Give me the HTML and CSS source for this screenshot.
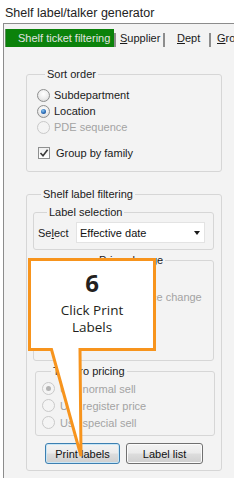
FILE: index.html
```html
<!DOCTYPE html>
<html>
<head>
<meta charset="utf-8">
<link rel="stylesheet" href="styles.css">
</head>
<body>
<div class="title">Shelf label/talker generator</div>
<div class="panel">
  <div class="tabs">
    <div class="tab tab-active">Shelf ticket filtering</div>
    <div class="tab-sep"></div>
    <div class="tab tab-supplier"><u>S</u>upplier</div>
    <div class="tab-sep"></div>
    <div class="tab tab-dept"><u>D</u>ept</div>
    <div class="tab-sep"></div>
    <div class="tab tab-group"><u>G</u>roup</div>
  </div>

  <fieldset class="group sort">
    <legend>Sort order</legend>
    <div class="opt"><span class="radio"></span><span>Subdepartment</span></div>
    <div class="opt"><span class="radio on"></span><span>Location</span></div>
    <div class="opt dis"><span class="radio dis"></span><span>PDE sequence</span></div>
    <div class="opt check-row"><span class="check"><svg width="10" height="10" viewBox="0 0 10 10"><path d="M1.5 5 L4 7.8 L8.6 1.8" fill="none" stroke="#3a3a3a" stroke-width="1.6"/></svg></span><span>Group by family</span></div>
  </fieldset>

  <fieldset class="group shelf">
    <legend>Shelf label filtering</legend>
    <fieldset class="inner labelsel">
      <legend>Label selection</legend>
      <div class="select-row">
        <span class="select-label">Se<u>l</u>ect</span>
        <div class="dropdown"><span>Effective date</span><span class="arrow"></span></div>
      </div>
    </fieldset>
    <fieldset class="inner pricechange">
      <legend>Price change</legend>
      <div class="pc-line">Since last price change</div>
    </fieldset>
    <fieldset class="inner zero">
      <legend>To zero pricing</legend>
      <div class="zopt dis"><span class="radio dis on"></span><span>Use normal sell</span></div>
      <div class="zopt dis"><span class="radio dis"></span><span>Use register price</span></div>
      <div class="zopt dis"><span class="radio dis"></span><span>Use special sell</span></div>
    </fieldset>
    <div class="buttons">
      <div class="btn btn-default">Print labels</div>
      <div class="btn btn-list">Label list</div>
    </div>
  </fieldset>
</div>

<div class="callout">
  <svg class="callout-shape" width="128" height="202" viewBox="0 0 128 202">
    <path d="M1.5 1.5 H126.5 V91.5 H52 L53 198 L23.5 91.5 H1.5 Z" fill="#ffffff" stroke="#f7941d" stroke-width="3"/>
  </svg>
  <div class="callout-text">
    <div class="num">6</div>
    <div class="line">Click Print</div>
    <div class="line">Labels</div>
  </div>
</div>
</body>
</html>
```
FILE: styles.css
```css
* { box-sizing: border-box; }
body {
  margin: 0;
  width: 234px;
  height: 478px;
  overflow: hidden;
  background: #ffffff;
  font-family: "Liberation Sans", Arial, sans-serif;
  font-size: 11px;
  color: #1a1a1a;
  position: relative;
}
.title {
  height: 23px;
  padding: 6px 0 0 5px;
  font-size: 12.5px;
  line-height: 14px;
  color: #222;
}
.panel {
  margin-left: 3px;
  height: 455px;
  border-top: 1px solid #8c8c8c;
  border-left: 1px solid #8c8c8c;
  background: #f3f3f3;
  padding-top: 5px;
}
.tabs {
  display: flex;
  height: 18px;
  margin-left: 1px;
  line-height: 18px;
  white-space: nowrap;
  overflow: hidden;
}
.tab { flex: none; }
.tab u { text-decoration: underline; text-underline-offset: 1px; }
.tab-active {
  width: 109px;
  background: #0b820b;
  color: #e2e2e2;
  padding-left: 12px;
  border-left: 1px solid #5c8f5c;
}
.tab-sep {
  flex: none;
  width: 2px;
  height: 14px;
  margin-top: 4px;
  background: #8d8d8d;
}
.tab-supplier { width: 47px; padding-left: 4px; }
.tab-dept { width: 44px; padding-left: 12px; }
.tab-group { padding-left: 6px; }

fieldset {
  margin: 0;
  padding: 0;
  min-width: 0;
  border: 1px solid #d6d6d6;
  border-radius: 3px;
}
legend {
  padding: 0 2px;
  line-height: 14px;
  margin-left: 8px;
  color: #1a1a1a;
}
.group { width: 196px; margin-left: 22px; }
.sort { margin-top: 20px; padding: 6px 0 10px 10px; }
.opt {
  display: flex;
  align-items: center;
  height: 16px;
  gap: 4px;
  line-height: 16px;
}
.opt.dis, .zopt.dis { color: #a3a3a3; }
.radio {
  flex: none;
  position: relative;
  width: 13px;
  height: 13px;
  border-radius: 50%;
  border: 1px solid #8e8f8f;
  background: radial-gradient(circle at 50% 35%, #ffffff 0%, #ececec 55%, #cfcfcf 100%);
}
.radio.on::after {
  content: "";
  position: absolute;
  left: 3px;
  top: 3px;
  width: 5px;
  height: 5px;
  border-radius: 50%;
  background: radial-gradient(circle at 40% 35%, #8cc7f2 0%, #2a6cb8 55%, #163d73 100%);
}
.radio.dis {
  border-color: #c9c9c9;
  background: #f4f4f4;
}
.radio.dis.on::after { background: #b3b3b3; }
.check-row { margin-top: 10px; gap: 6px; }
.check {
  flex: none;
  width: 12px;
  height: 12px;
  margin-left: 1px;
  border: 1px solid #8e8f8f;
  background: linear-gradient(#f0f0f0, #ffffff);
  display: flex;
  align-items: center;
  justify-content: center;
}
.check svg { display: block; }

.shelf { margin-top: 15px; padding: 4px 7px 6px 6px; }
.shelf > legend { margin-left: 8px; }
.inner > legend { margin-left: 9px; }
.labelsel { padding: 3px 0 6px 4px; }
.select-row { display: flex; align-items: center; height: 21px; }
.select-label { width: 38px; }
.select-label u { text-decoration: underline; }
.dropdown {
  width: 129px;
  height: 21px;
  display: flex;
  align-items: center;
  justify-content: space-between;
  background: #ffffff;
  border: 1px solid #e3e3e3;
  padding: 0 4px 0 3px;
  color: #111;
}
.arrow {
  width: 0;
  height: 0;
  border-left: 3.5px solid transparent;
  border-right: 3.5px solid transparent;
  border-top: 4px solid #1a1a1a;
}
.pricechange { margin-top: 3px; padding: 22px 0 55px 54px; }
.pc-line { height: 16px; line-height: 16px; color: #a3a3a3; white-space: nowrap; }
.zero { margin: 3px -1px 0 2px; padding: 2px 0 4px 6px; }
.zopt {
  display: flex;
  align-items: center;
  height: 17px;
  gap: 5px;
}
.buttons {
  display: flex;
  gap: 6px;
  margin: 7px 0 0 12px;
}
.btn {
  height: 21px;
  display: flex;
  align-items: center;
  justify-content: center;
  border-radius: 3px;
  border: 1px solid #707070;
  background: linear-gradient(#f3f3f3 0%, #ebebeb 48%, #dddddd 52%, #cfcfcf 100%);
  box-shadow: inset 0 0 0 1px #fbfbfb;
  color: #111;
}
.btn-default {
  width: 75px;
  border-color: #3c7fb1;
  box-shadow: inset 0 0 0 1px #c8e6f6;
}
.btn-list { width: 77px; }

.callout {
  position: absolute;
  left: 28px;
  top: 258px;
  width: 128px;
  height: 92px;
}
.callout-shape {
  position: absolute;
  left: 0;
  top: 0;
  overflow: visible;
}
.callout-text {
  position: relative;
  text-align: center;
  font-family: "Open Sans", "Noto Sans", sans-serif;
  color: #231f20;
  padding-top: 11px;
}
.num {
  font-size: 24px;
  font-weight: 700;
  line-height: 28px;
}
.line {
  font-size: 13.5px;
  line-height: 17px;
}
.num + .line { margin-top: 5px; }
```
